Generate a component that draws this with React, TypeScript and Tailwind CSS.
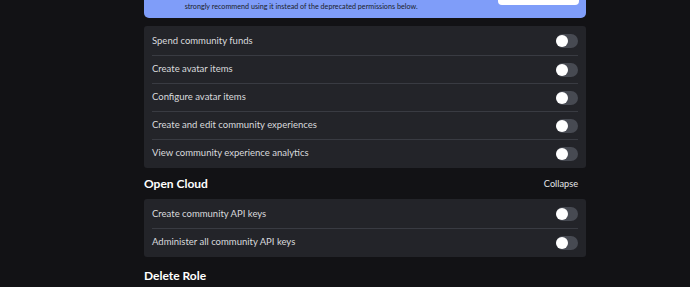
import React from 'react';

type Permiso = { id: string; label: string };

const permisosGrupo: Permiso[] = [
  { id: 'funds', label: 'Spend community funds' },
  { id: 'avatar-create', label: 'Create avatar items' },
  { id: 'avatar-config', label: 'Configure avatar items' },
  { id: 'experiences', label: 'Create and edit community experiences' },
  { id: 'analytics', label: 'View community experience analytics' },
];

const permisosCloud: Permiso[] = [
  { id: 'api-create', label: 'Create community API keys' },
  { id: 'api-admin', label: 'Administer all community API keys' },
];

// Interruptor apagado
const Toggle = () => (
  <span className="relative inline-block h-[14px] w-[22px] rounded-full bg-[#474a52]">
    <span className="absolute left-0 top-[1px] h-[12px] w-[12px] rounded-full bg-white" />
  </span>
);

const ListaPermisos = ({ items }: { items: Permiso[] }) => (
  <div className="rounded-[3px] bg-[#232429] px-2 py-[1px]">
    {items.map((p, i) => (
      <div
        key={p.id}
        className={`flex h-[28px] items-center justify-between ${
          i > 0 ? 'border-t border-[#393b42]' : ''
        }`}
      >
        <span className="text-[9.5px] text-[#d9dadd]">{p.label}</span>
        <Toggle />
      </div>
    ))}
  </div>
);

export default function App() {
  return (
    <div
      className="h-[287px] w-[690px] overflow-hidden bg-[#121215]"
      style={{ fontFamily: 'Lato, "Noto Sans", sans-serif' }}
    >
      <div className="ml-[144px] w-[442px]">
        {/* Aviso azul, cortado arriba */}
        <div className="-mt-[22px] flex h-[40px] items-start rounded-b-[5px] bg-[#7f9df9] pl-3 pr-[7px]">
          <span className="mt-[4px] text-[14px] font-bold text-[#1b1d29]">D</span>
          <div className="ml-[18px] mt-[24px] text-[7.2px] leading-[9px] text-[#1b1d29]">
            strongly recommend using it instead of the deprecated permissions below.
          </div>
          <div className="ml-auto h-[27px] w-[81px] rounded-[4px] bg-white" />
        </div>

        <div className="mt-[8px]">
          <ListaPermisos items={permisosGrupo} />
        </div>

        <div className="flex h-[31px] items-center justify-between">
          <h3 className="text-[12px] font-bold text-white">Open Cloud</h3>
          <span className="mr-2 text-[9.2px] text-[#e5e6e8]">Collapse</span>
        </div>

        <ListaPermisos items={permisosCloud} />

        <h3 className="mt-[10px] text-[12px] font-bold text-white">Delete Role</h3>
      </div>
    </div>
  );
}
